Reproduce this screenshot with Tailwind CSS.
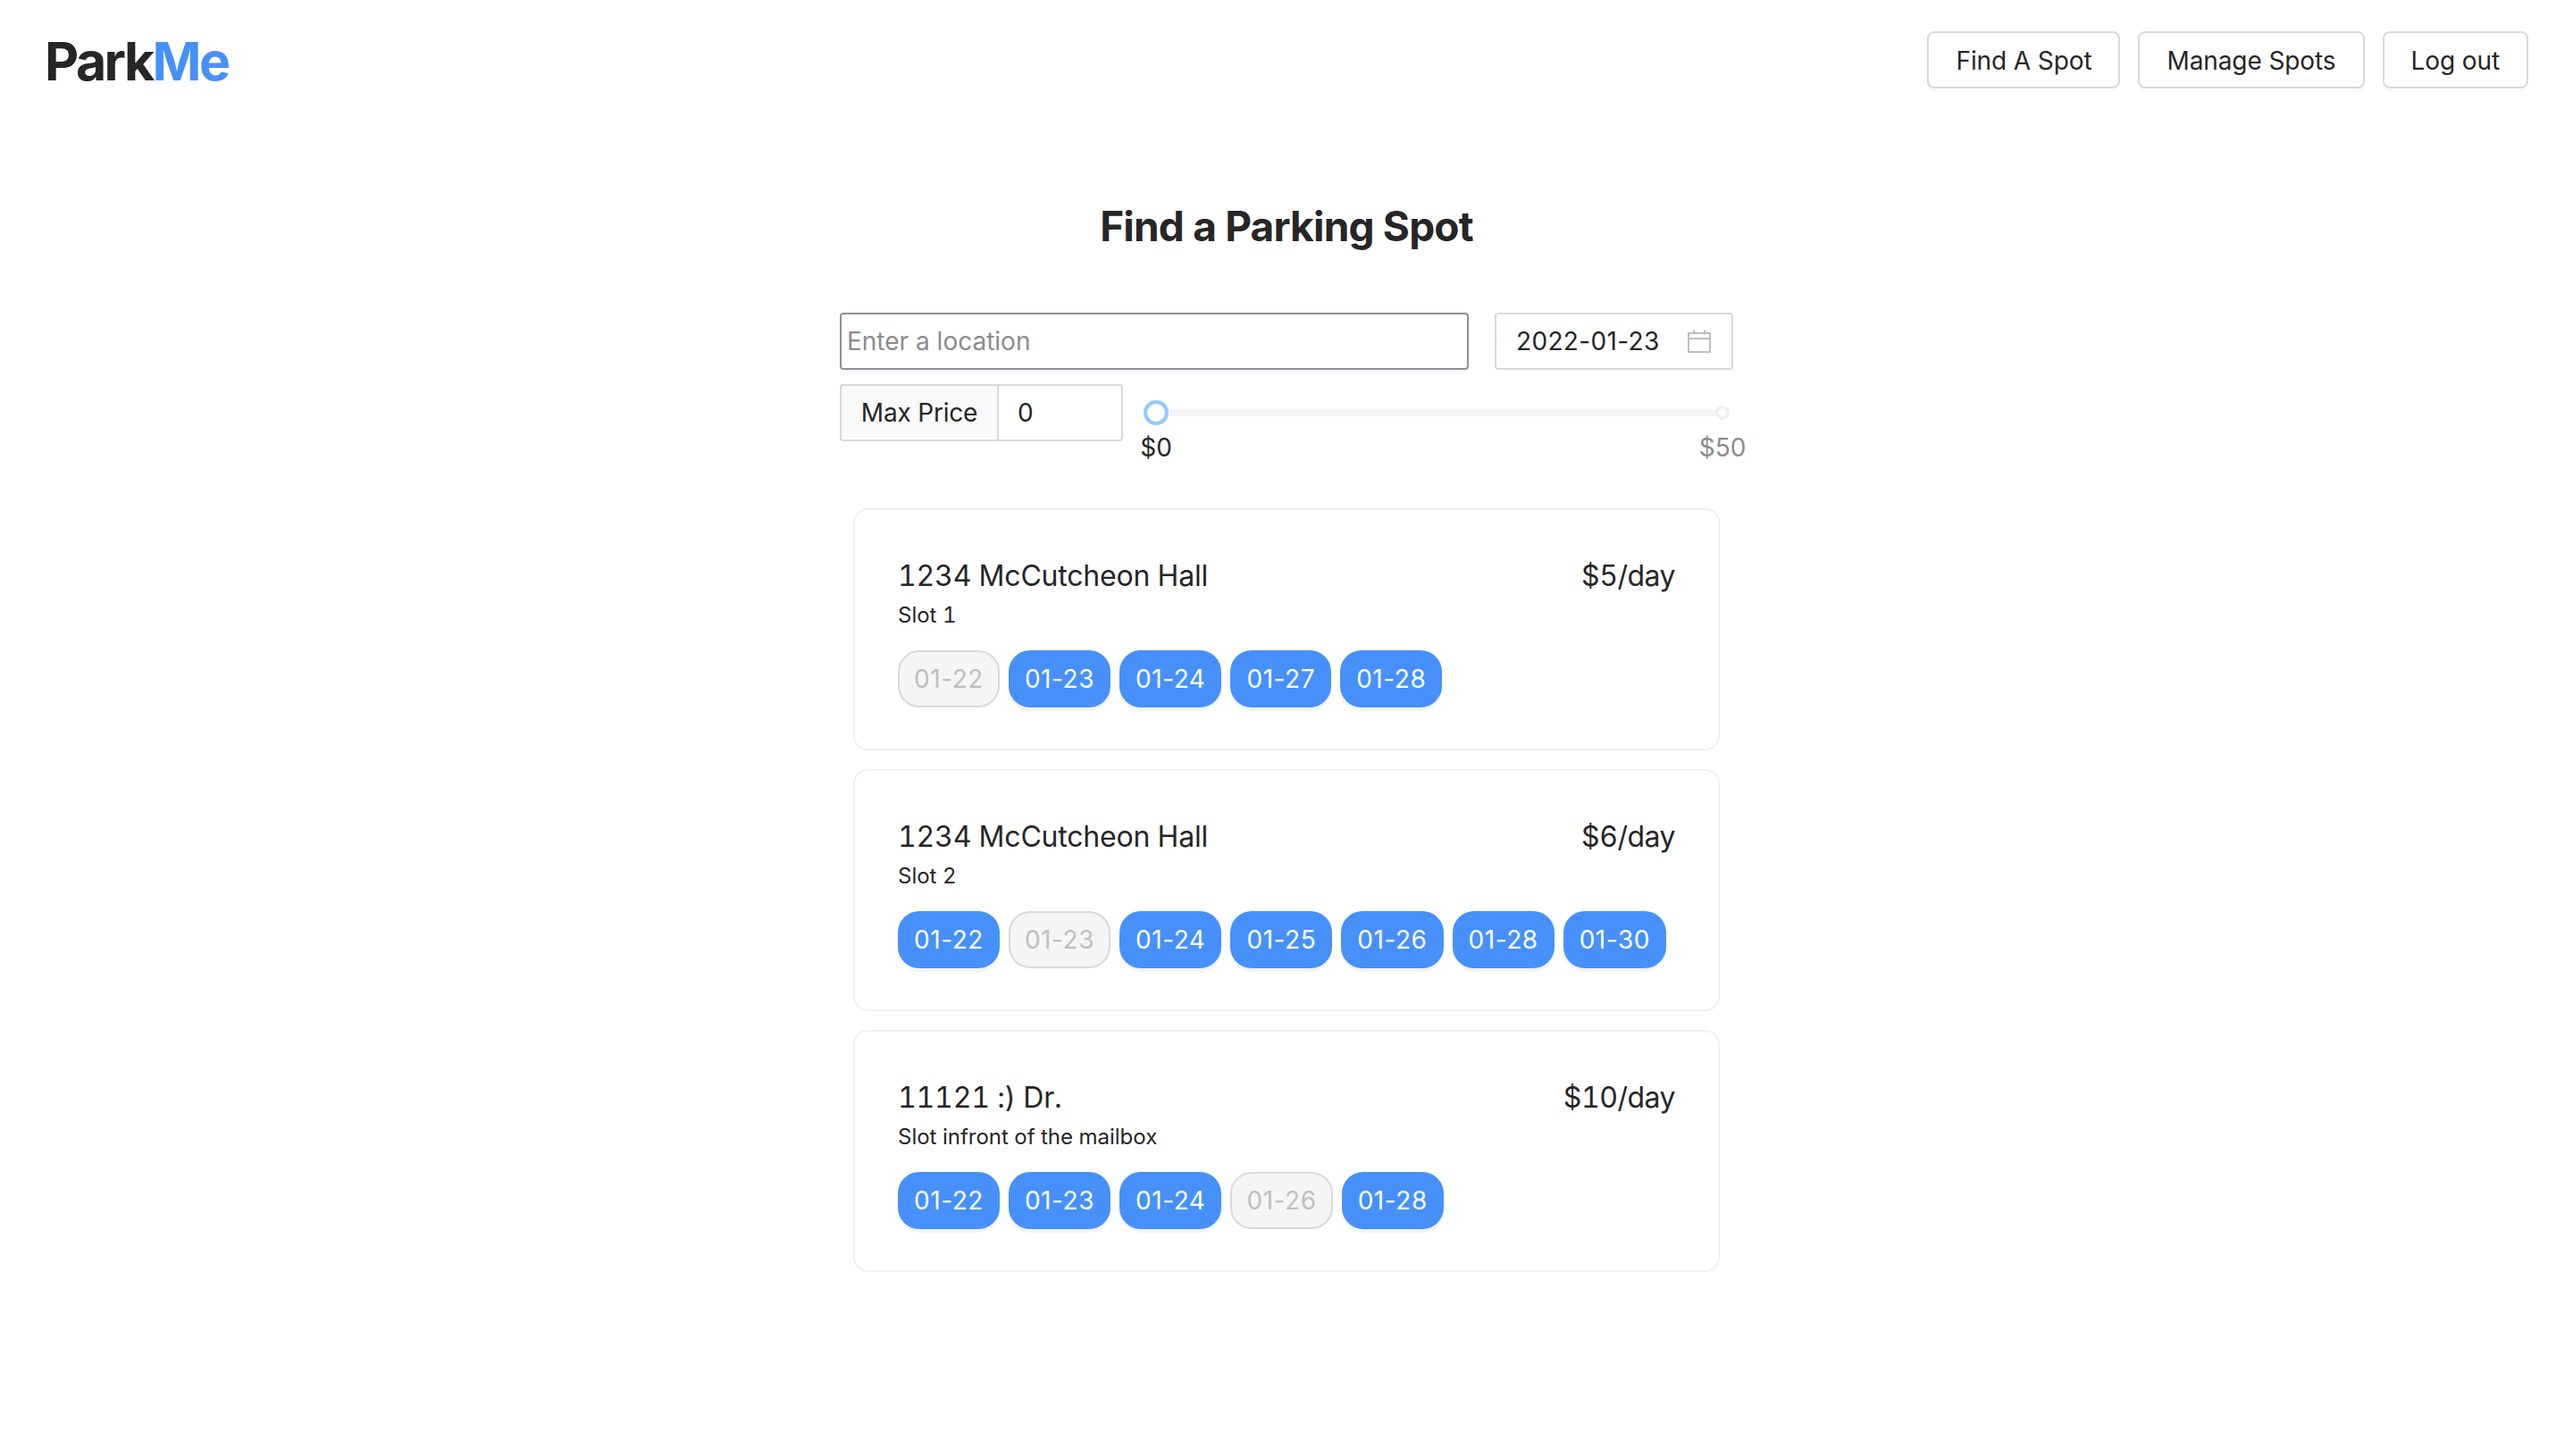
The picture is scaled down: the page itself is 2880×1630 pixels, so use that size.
<!DOCTYPE html>
<html lang="en">
<head>
    <meta charset="UTF-8">
    <title>ParkMe</title>
    <script src="https://cdn.jsdelivr.net/npm/@tailwindcss/browser@4"></script>
</head>
<body class="bg-white text-[#262626] font-['Inter',sans-serif] min-h-screen">
    <!-- Nav -->
    <header class="flex items-start justify-between pl-[50px] pr-[50px] pt-[35px]">
        <div class="text-[59px] leading-[64px] pt-[2px] font-[650] tracking-[-2.6px]">Park<span class="text-[#4790fa]">Me</span></div>
        <nav class="flex gap-[20px]">
            <button class="h-[64px] px-[30px] pt-[2px] text-[28px] tracking-[-0.1px] border-2 border-[#d9d9d9] rounded-[8px] shadow-[0_4px_0_rgba(0,0,0,0.02)]">Find A Spot</button>
            <button class="h-[64px] px-[30px] pt-[2px] text-[28px] tracking-[-0.1px] border-2 border-[#d9d9d9] rounded-[8px] shadow-[0_4px_0_rgba(0,0,0,0.02)]">Manage Spots</button>
            <button class="h-[64px] px-[30px] pt-[2px] text-[28px] tracking-[-0.1px] border-2 border-[#d9d9d9] rounded-[8px] shadow-[0_4px_0_rgba(0,0,0,0.02)]">Log out</button>
        </nav>
    </header>

    <main class="flex flex-col items-center pt-[123px]">
        <h1 class="text-[46px] leading-[58px] font-[650] tracking-[-0.8px] text-center">Find a Parking Spot</h1>

        <!-- Search -->
        <div class="w-[1000px] mt-[68px]">
            <div class="flex justify-between">
                <input type="text" placeholder="Enter a location" class="w-[704px] h-[64px] px-[6px] text-[28px] border-2 border-[#8f8f9f] rounded-[4px] outline-none placeholder:text-[#8c8c8c]">
                <div class="w-[267px] h-[64px] pl-[22px] pr-[22px] flex items-center justify-between border-2 border-[#d9d9d9] rounded-[4px] text-[28px]">
                    <span class="tracking-[0.35px]">2022-01-23</span>
                    <svg class="w-[28px] h-[28px] text-[#bfbfbf]" viewBox="0 0 28 28" fill="none" stroke="currentColor" stroke-width="2">
                        <rect x="2" y="5" width="24" height="21"/>
                        <path d="M2 11h24M8 1.500v5M20 1.500v5"/>
                    </svg>
                </div>
            </div>

            <div class="flex mt-[16px]">
                <div class="flex w-[317px] h-[64px] border-2 border-[#d9d9d9] rounded-[4px] text-[28px]">
                    <div class="w-[176px] flex items-center justify-center bg-[#fafafa] border-r-2 border-[#d9d9d9] rounded-l-[4px] tracking-[-0.2px]">Max Price</div>
                    <div class="flex-1 flex items-center pl-[21px]">0</div>
                </div>
                <div class="ml-[37px] w-[634px] relative h-[64px] text-[28px]">
                    <div class="absolute left-0 right-0 top-[28px] h-[8px] bg-[#f5f5f5] rounded-full"></div>
                    <div class="absolute left-[-14px] top-[18px] w-[28px] h-[28px] bg-white rounded-full border-4 border-[#91caff]"></div>
                    <div class="absolute right-[-8px] top-[24px] w-[16px] h-[16px] bg-white rounded-full border-4 border-[#f0f0f0]"></div>
                    <span class="absolute left-0 top-[54px] -translate-x-1/2 leading-[34px]">$0</span>
                    <span class="absolute left-full top-[54px] -translate-x-1/2 leading-[34px] text-[#8c8c8c]">$50</span>
                </div>
            </div>
        </div>

        <!-- Spots -->
        <div class="w-[970px] mt-[75px] flex flex-col gap-[21px]">
            <article class="h-[271px] border-2 border-[#f0f0f0] rounded-[16px] px-[48px] pt-[54px]">
                <div class="flex justify-between text-[32px] leading-[40px] tabular-nums"><span class="tracking-[-0.2px]">1234 McCutcheon Hall</span><span class="tracking-[-0.5px]">$5/day</span></div>
                <p class="text-[24px] leading-[32px] mt-[8px] tabular-nums">Slot 1</p>
                <div class="flex gap-[10px] mt-[23px]">
                    <span class="h-[64px] px-[16px] flex items-center text-[28px] tracking-[0.55px] rounded-[24px] border-2 border-[#d9d9d9] bg-[#f5f5f5] text-[#bfbfbf]">01-22</span>
                    <span class="h-[64px] px-[18px] flex items-center text-[28px] tracking-[0.55px] rounded-[24px] bg-[#4790fa] text-white shadow-[0_4px_0_rgba(0,0,0,0.045)]">01-23</span>
                    <span class="h-[64px] px-[18px] flex items-center text-[28px] tracking-[0.55px] rounded-[24px] bg-[#4790fa] text-white shadow-[0_4px_0_rgba(0,0,0,0.045)]">01-24</span>
                    <span class="h-[64px] px-[18px] flex items-center text-[28px] tracking-[0.55px] rounded-[24px] bg-[#4790fa] text-white shadow-[0_4px_0_rgba(0,0,0,0.045)]">01-27</span>
                    <span class="h-[64px] px-[18px] flex items-center text-[28px] tracking-[0.55px] rounded-[24px] bg-[#4790fa] text-white shadow-[0_4px_0_rgba(0,0,0,0.045)]">01-28</span>
                </div>
            </article>

            <article class="h-[271px] border-2 border-[#f0f0f0] rounded-[16px] px-[48px] pt-[54px]">
                <div class="flex justify-between text-[32px] leading-[40px] tabular-nums"><span class="tracking-[-0.2px]">1234 McCutcheon Hall</span><span class="tracking-[-0.5px]">$6/day</span></div>
                <p class="text-[24px] leading-[32px] mt-[8px] tabular-nums">Slot 2</p>
                <div class="flex gap-[10px] mt-[23px]">
                    <span class="h-[64px] px-[18px] flex items-center text-[28px] tracking-[0.55px] rounded-[24px] bg-[#4790fa] text-white shadow-[0_4px_0_rgba(0,0,0,0.045)]">01-22</span>
                    <span class="h-[64px] px-[16px] flex items-center text-[28px] tracking-[0.55px] rounded-[24px] border-2 border-[#d9d9d9] bg-[#f5f5f5] text-[#bfbfbf]">01-23</span>
                    <span class="h-[64px] px-[18px] flex items-center text-[28px] tracking-[0.55px] rounded-[24px] bg-[#4790fa] text-white shadow-[0_4px_0_rgba(0,0,0,0.045)]">01-24</span>
                    <span class="h-[64px] px-[18px] flex items-center text-[28px] tracking-[0.55px] rounded-[24px] bg-[#4790fa] text-white shadow-[0_4px_0_rgba(0,0,0,0.045)]">01-25</span>
                    <span class="h-[64px] px-[18px] flex items-center text-[28px] tracking-[0.55px] rounded-[24px] bg-[#4790fa] text-white shadow-[0_4px_0_rgba(0,0,0,0.045)]">01-26</span>
                    <span class="h-[64px] px-[18px] flex items-center text-[28px] tracking-[0.55px] rounded-[24px] bg-[#4790fa] text-white shadow-[0_4px_0_rgba(0,0,0,0.045)]">01-28</span>
                    <span class="h-[64px] px-[18px] flex items-center text-[28px] tracking-[0.55px] rounded-[24px] bg-[#4790fa] text-white shadow-[0_4px_0_rgba(0,0,0,0.045)]">01-30</span>
                </div>
            </article>

            <article class="h-[271px] border-2 border-[#f0f0f0] rounded-[16px] px-[48px] pt-[54px]">
                <div class="flex justify-between text-[32px] leading-[40px] tabular-nums"><span class="tracking-[-0.2px]">11121 :) Dr.</span><span class="tracking-[-0.5px]">$10/day</span></div>
                <p class="text-[24px] leading-[32px] mt-[8px] tabular-nums">Slot infront of the mailbox</p>
                <div class="flex gap-[10px] mt-[23px]">
                    <span class="h-[64px] px-[18px] flex items-center text-[28px] tracking-[0.55px] rounded-[24px] bg-[#4790fa] text-white shadow-[0_4px_0_rgba(0,0,0,0.045)]">01-22</span>
                    <span class="h-[64px] px-[18px] flex items-center text-[28px] tracking-[0.55px] rounded-[24px] bg-[#4790fa] text-white shadow-[0_4px_0_rgba(0,0,0,0.045)]">01-23</span>
                    <span class="h-[64px] px-[18px] flex items-center text-[28px] tracking-[0.55px] rounded-[24px] bg-[#4790fa] text-white shadow-[0_4px_0_rgba(0,0,0,0.045)]">01-24</span>
                    <span class="h-[64px] px-[16px] flex items-center text-[28px] tracking-[0.55px] rounded-[24px] border-2 border-[#d9d9d9] bg-[#f5f5f5] text-[#bfbfbf]">01-26</span>
                    <span class="h-[64px] px-[18px] flex items-center text-[28px] tracking-[0.55px] rounded-[24px] bg-[#4790fa] text-white shadow-[0_4px_0_rgba(0,0,0,0.045)]">01-28</span>
                </div>
            </article>
        </div>
    </main>
</body>
</html>
